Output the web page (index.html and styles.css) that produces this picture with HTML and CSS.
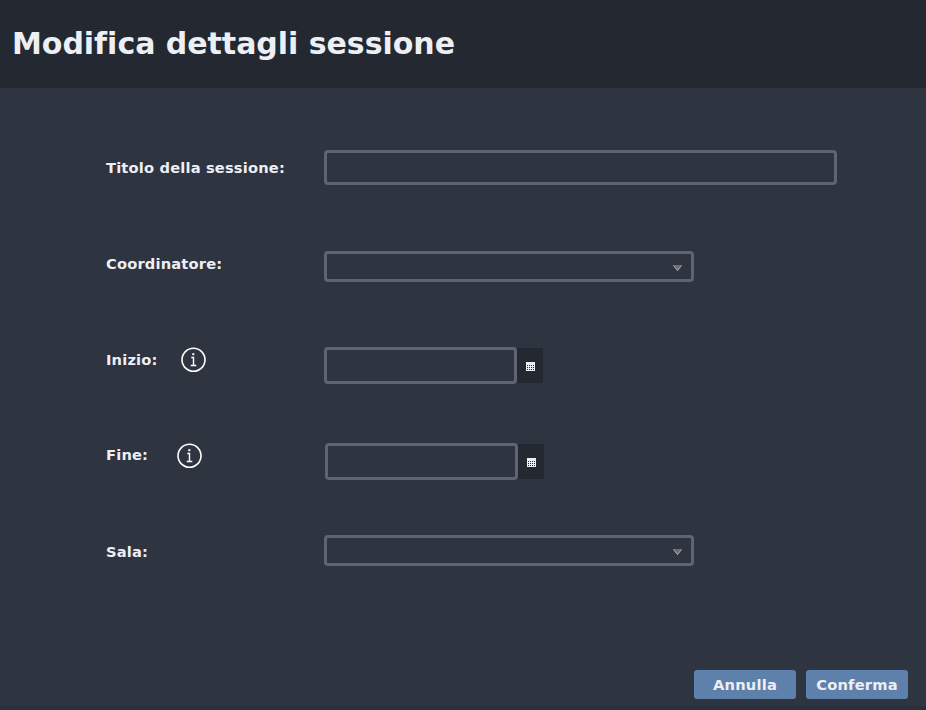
FILE: index.html
```html
<!DOCTYPE html>
<html lang="it">
<head>
<meta charset="utf-8">
<title>Modifica dettagli sessione</title>
<link rel="stylesheet" href="styles.css">
</head>
<body>
<header class="header"><h1>Modifica dettagli sessione</h1></header>
<main class="form">
  <div class="row row-title"><div class="label">Titolo della sessione:</div><div class="field field-title"></div></div>
  <div class="row row-coord"><div class="label">Coordinatore:</div><div class="field select"><svg width="9" height="6" viewBox="0 0 9 6"><path class="caret" d="M0 0h9L4.5 6z"/><path class="edge" d="M.5.5l4 5 4-5"/></svg></div></div>
  <div class="row row-start"><div class="label"><span>Inizio:</span><svg class="info" width="26" height="26" viewBox="-.5 0 26 26"><circle cx="13" cy="12.7" r="11.5"/><path class="stem" d="M10.8 10.5h2.2v8M10.2 18.5h5.6"/><path class="dot" d="M11.8 6.2h2v2h-2z"/></svg></div><div class="field date"></div><div class="cal"><svg width="9" height="9" viewBox="0 0 9 9"><path class="sheet" d="M0 0h9v9H0z"/><path class="grid" d="M1 3.5h7M1 5.5h7M1 7.5h7"/></svg></div></div>
  <div class="row row-end"><div class="label"><span>Fine:</span><svg class="info" width="26" height="26" viewBox="-.5 0 26 26"><circle cx="13" cy="12.7" r="11.5"/><path class="stem" d="M10.8 10.5h2.2v8M10.2 18.5h5.6"/><path class="dot" d="M11.8 6.2h2v2h-2z"/></svg></div><div class="field date"></div><div class="cal"><svg width="9" height="9" viewBox="0 0 9 9"><path class="sheet" d="M0 0h9v9H0z"/><path class="grid" d="M1 3.5h7M1 5.5h7M1 7.5h7"/></svg></div></div>
  <div class="row row-room"><div class="label">Sala:</div><div class="field select"><svg width="9" height="6" viewBox="0 0 9 6"><path class="caret" d="M0 0h9L4.5 6z"/><path class="edge" d="M.5.5l4 5 4-5"/></svg></div></div>
</main>
<footer class="footer"><button>Annulla</button><button>Conferma</button></footer>
</body>
</html>
```
FILE: styles.css
```css
* { box-sizing: border-box; }
body { margin: 0; height: 710px; display: flex; flex-direction: column; overflow: hidden; background: #2e3440; color: #eceff4; font-family: "DejaVu Sans", sans-serif; font-variant-ligatures: none; border-bottom: 4px solid #2b2f3b; }
.header { flex: none; height: 88px; background: #242831; padding: 0 12px; display: flex; align-items: center; }
h1 { margin: 0; font-size: 30px; line-height: 40px; font-weight: bold; letter-spacing: -.03px; }
.form { flex: 1; padding: 47px 0 0 106px; }
.row { height: 96px; display: flex; align-items: flex-start; }
.label { width: 218px; height: 65px; display: flex; align-items: center; font-size: 14.67px; letter-spacing: .17px; font-weight: bold; white-space: nowrap; }
.field { border: 3px solid #5e6473; border-radius: 4px; }
.field-title { width: 513px; height: 35px; margin-top: 15px; }
.select { width: 370px; height: 31px; margin-top: 20px; display: flex; align-items: center; justify-content: flex-end; padding: 3px 9px 0 0; }
.row-room .select { margin-top: 16px; }
.date { width: 193px; height: 37px; margin-top: 20px; }
.row-end .label { width: 219px; height: 63px; }
.row-start .label span { width: 74px; }
.row-end .label span { width: 70px; }
.info { flex: none; fill: none; stroke: #fff; stroke-width: 1.6; }
.row-end .info { margin-top: 3px; }
.info .stem { stroke-width: 1.4; }
.info .dot { fill: #fff; stroke: none; }
.caret { fill: #6c6c6c; }
.edge { fill: none; stroke: #c4c4c4; stroke-width: .8; }
.cal { width: 26px; height: 35px; margin-top: 21px; padding-top: 2px; background: #242831; display: flex; align-items: center; justify-content: center; }
.cal svg { margin-left: 1px; }
.sheet { fill: #eceff4; }
.grid { stroke: #242831; stroke-width: 1; stroke-dasharray: 1 1; fill: none; }
.footer { flex: none; height: 36px; display: flex; justify-content: flex-end; gap: 10px; padding-right: 18px; }
button { width: 102px; height: 29px; padding: 0; border: 0; border-radius: 3px; background: #5e81ac; color: #eceff4; font: bold 14.67px "DejaVu Sans", sans-serif; letter-spacing: .2px; }
```
